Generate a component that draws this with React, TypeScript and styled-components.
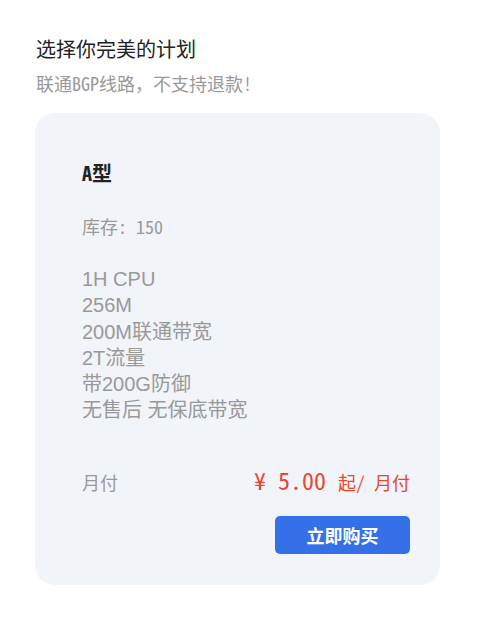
import React from "react";
import styled, { createGlobalStyle } from "styled-components";

const Global = createGlobalStyle`
  html, body { margin: 0; padding: 0; background: #fff; }
  body { font-family: "Noto Sans CJK SC", sans-serif; }
`;

const mono = `"Noto Sans Mono CJK SC", "Noto Sans CJK SC", monospace`;

const Page = styled.div`
  padding: 35px 45px 40px 35px;
`;

const Title = styled.h2`
  margin: 0 0 0 1px;
  font-size: 20px;
  font-weight: 400;
  line-height: 28px;
  color: #222;
  font-family: "Noto Sans CJK SC", sans-serif;
`;

const Sub = styled.p`
  margin: 8px 0 18px 1px;
  font-size: 18px;
  line-height: 24px;
  color: #999;
  font-family: ${mono};
`;

const Card = styled.div`
  background: #f1f4f8;
  border-radius: 20px;
  padding: 46px 30px 31px 47px;
  display: flex;
  flex-direction: column;
`;

const Name = styled.div`
  font-family: ${mono};
  font-weight: 700;
  font-size: 20px;
  line-height: 28px;
  color: #222;
`;

const Stock = styled.div`
  margin-top: 27px;
  font-family: ${mono};
  font-size: 18px;
  line-height: 24px;
  color: #999;
`;

const Features = styled.ul`
  list-style: none;
  margin: 28px 0 0;
  padding: 0;
  font-family: "Liberation Sans", "Noto Sans CJK SC", sans-serif;
  font-size: 20px;
  line-height: 26.3px;
  color: #999;
`;

const PriceRow = styled.div`
  margin-top: 40px;
  display: flex;
  justify-content: space-between;
  align-items: baseline;
  line-height: 32px;
`;

const Period = styled.span`
  font-family: ${mono};
  font-size: 18px;
  color: #999;
`;

const Price = styled.span`
  font-family: ${mono};
  color: #e8472c;
  font-size: 24px;
  white-space: pre;
`;

const Unit = styled.span`
  font-size: 18px;
`;

const Actions = styled.div`
  display: flex;
  justify-content: flex-end;
  margin-top: 18px;
`;

const Buy = styled.button`
  width: 135px;
  height: 38px;
  border: none;
  border-radius: 5px;
  background: #3570e8;
  color: #fff;
  font-family: ${mono};
  font-weight: 700;
  font-size: 18px;
  cursor: pointer;
`;

const features = ["1H CPU", "256M", "200M联通带宽", "2T流量", "带200G防御", "无售后 无保底带宽"];

export default function App() {
  return (
    <>
      <Global />
      <Page>
        <Title>选择你完美的计划</Title>
        <Sub>联通BGP线路，不支持退款!</Sub>
        <Card>
          <Name>A型</Name>
          <Stock>库存: 150</Stock>
          <Features>
            {features.map((f) => (
              <li key={f}>{f}</li>
            ))}
          </Features>
          <PriceRow>
            <Period>月付</Period>
            <Price>
              {"¥ 5.00 "}
              <Unit>起/ 月付</Unit>
            </Price>
          </PriceRow>
          <Actions>
            <Buy>立即购买</Buy>
          </Actions>
        </Card>
      </Page>
    </>
  );
}
